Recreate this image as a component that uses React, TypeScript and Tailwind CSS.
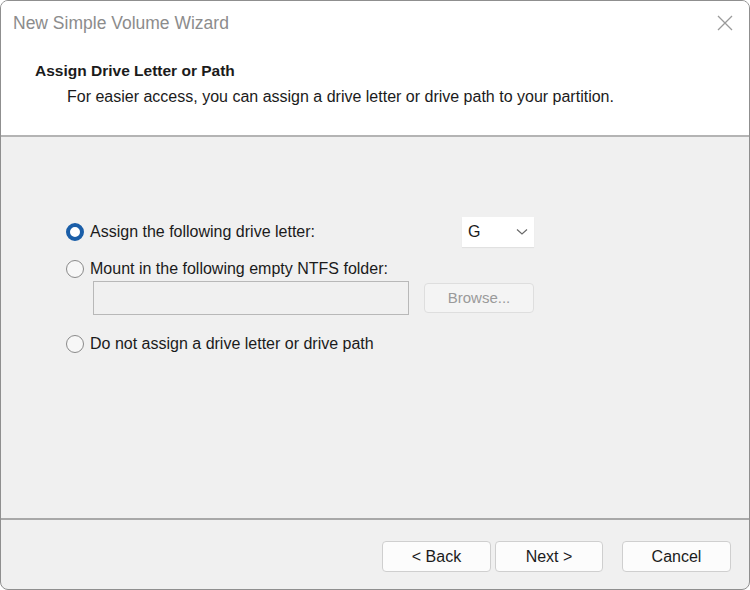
import React from 'react'

function Radio({ checked }: { checked?: boolean }) {
    return checked ? (
        <span className="w-[18px] h-[18px] rounded-full border-[4px] border-[#1a5ea8] bg-white shrink-0" />
    ) : (
        <span className="w-[18px] h-[18px] rounded-full border border-[#8a8a8a] bg-[#f7f7f7] shrink-0" />
    )
}

function WinButton({ label, className = '' }: { label: string, className?: string }) {
    return (
        <button className={`h-[31px] rounded-[4px] border border-[#cfcfcf] bg-[#fcfcfc] text-[16px] text-[#1b1b1b] ${className}`}>{label}</button>
    )
}

function App() {
    return (
        <div className="w-[750px] h-[590px] flex flex-col bg-[#f0f0f0] border border-[#8f8f8f] rounded-[8px] overflow-hidden text-[#1b1b1b]" style={{ fontFamily: '"Liberation Sans", Arial, sans-serif' }}>
            <div className="h-[136px] bg-white border-b-2 border-[#b4b4b4] shrink-0">
                <div className="flex items-center justify-between h-[45px] pl-[12px] pr-[16px]">
                    <span className="text-[17.5px] text-[#8c8c8c]">New Simple Volume Wizard</span>
                    <svg width="16" height="16" viewBox="0 0 16 16" className="mb-[2px]">
                        <path d="M1 1 L15 15 M15 1 L1 15" stroke="#9a9a9a" strokeWidth="1.3" />
                    </svg>
                </div>
                <div className="pl-[34px] pt-[15px]">
                    <div className="text-[15.5px] font-bold leading-[20px]">Assign Drive Letter or Path</div>
                    <div className="pl-[32px] text-[16px] leading-[20px] mt-[6px]">For easier access, you can assign a drive letter or drive path to your partition.</div>
                </div>
            </div>

            <div className="flex-1 pt-[80px] pl-[65px] text-[16px]">
                <div className="flex items-center h-[30px]">
                    <Radio checked />
                    <span className="ml-[6px] w-[372px]">Assign the following drive letter:</span>
                    <div className="w-[72px] h-[30px] bg-white flex items-center justify-between pl-[6px] pr-[6px] shadow-[0_1px_1px_rgba(0,0,0,0.06)]">
                        <span className="text-[16px]">G</span>
                        <svg width="12" height="8" viewBox="0 0 12 8">
                            <path d="M1 1.5 L6 6 L11 1.5" fill="none" stroke="#6a6a6a" strokeWidth="1.2" />
                        </svg>
                    </div>
                </div>
                <div className="flex items-center h-[20px] mt-[12px]">
                    <Radio />
                    <span className="ml-[6px]">Mount in the following empty NTFS folder:</span>
                </div>
                <div className="flex items-center mt-[2px] pl-[27px]">
                    <div className="w-[316px] h-[34px] border border-[#b8b8b8] bg-[#f0f0f0]" />
                    <div className="ml-[15px] w-[110px] h-[30px] rounded-[4px] border border-[#dedede] bg-[#f4f4f4] flex items-center justify-center text-[15px] text-[#9a9a9a]">Browse...</div>
                </div>
                <div className="flex items-center h-[20px] mt-[19px]">
                    <Radio />
                    <span className="ml-[6px]">Do not assign a drive letter or drive path</span>
                </div>
            </div>

            <div className="h-[71px] shrink-0 border-t-2 border-[#a8a8a8] flex items-start pt-[21px] pl-[381px]">
                <WinButton label="< Back" className="w-[109px]" />
                <WinButton label="Next >" className="w-[108px] ml-[4px]" />
                <WinButton label="Cancel" className="w-[109px] ml-[19px]" />
            </div>
        </div>
    )
}

export default App
